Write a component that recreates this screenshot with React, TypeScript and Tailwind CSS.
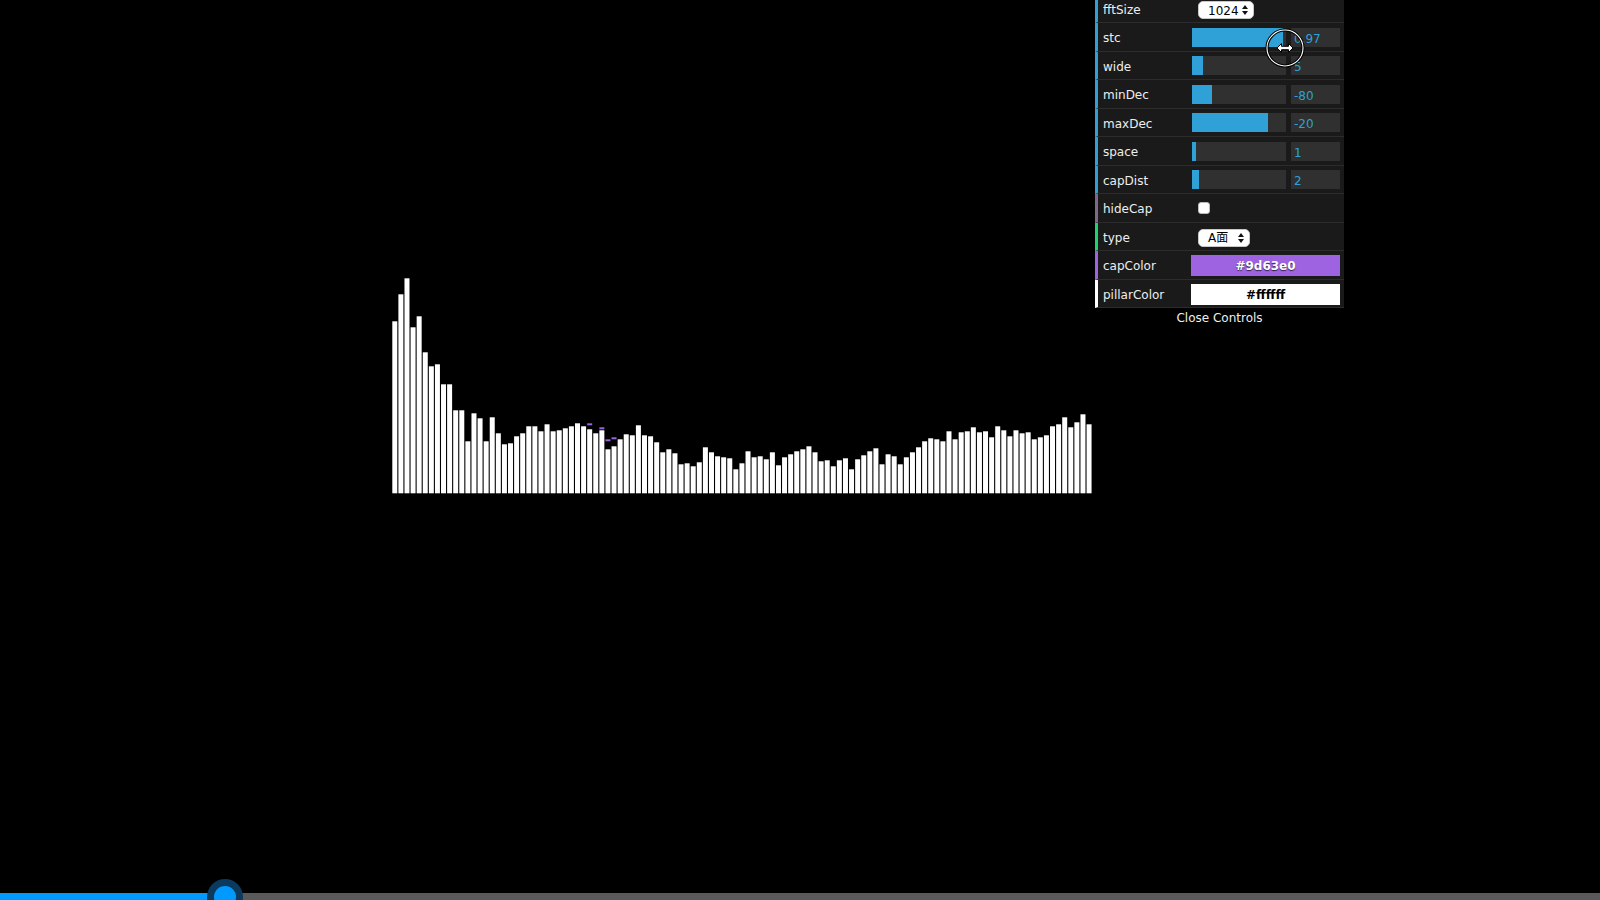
import type { ReactNode } from "react";

// bar heights measured from the spectrum (px)
const bars = [
  172, 199, 215, 166, 177, 141, 127, 129, 109, 109, 83, 83, 52, 80, 75, 52, 76, 60, 49, 50,
  57, 60, 67, 67, 62, 69, 62, 63, 65, 67, 70, 67, 64, 60, 63, 44, 47, 54, 59, 58,
  68, 58, 57, 51, 41, 44, 40, 29, 30, 27, 31, 46, 41, 37, 36, 35, 24, 30, 42, 36,
  37, 34, 41, 28, 36, 39, 42, 44, 47, 41, 32, 33, 27, 33, 35, 24, 34, 38, 42, 45,
  29, 39, 37, 29, 36, 41, 46, 52, 55, 54, 52, 62, 54, 61, 62, 66, 61, 62, 56, 67,
  63, 57, 63, 60, 61, 54, 56, 58, 67, 69, 76, 66, 71, 79, 69,
];

// visible falling caps: bar index -> cap height
const caps: Record<number, number> = { 32: 69, 34: 65, 35: 53, 36: 55 };

const PITCH = 6.09;
const BASE = 223.3;

function Spectrum() {
  return (
    <svg width="700" height="224" className="block ml-[392px] mt-[270px]">
      {bars.map((h, i) => (
        <rect key={i} x={0.3 + i * PITCH} y={BASE - h} width={5} height={h} fill="#ffffff" />
      ))}
      {Object.entries(caps).map(([i, h]) => (
        <rect key={"c" + i} x={0.3 + Number(i) * PITCH} y={BASE - h - 1} width={5} height={2} fill="#9d63e0" />
      ))}
    </svg>
  );
}

function Arrows() {
  return (
    <svg width="6" height="10" viewBox="0 0 6 10">
      <path d="M3 0 L6 4 L0 4 Z" fill="#111" />
      <path d="M3 10 L6 6 L0 6 Z" fill="#111" />
    </svg>
  );
}

function Row({ color, label, children }: { color: string; label: string; children?: ReactNode }) {
  return (
    <div className={`flex items-center h-[28.5px] border-b border-[#2c2c2c] border-l-[3px] pl-[5px] pr-[4px] ${color}`}>
      <div className="w-[89px] pt-[3px] text-[12px] text-[#eee] truncate">{label}</div>
      {children}
    </div>
  );
}

function NumberCtrl({ fill, value }: { fill: number; value: string }) {
  return (
    <div className="flex items-center gap-[5px] mt-[1px]">
      <div className="w-[94px] h-[19px] bg-[#303030]">
        <div className="h-full bg-[#2fa1d6]" style={{ width: fill }} />
      </div>
      <div className="w-[49px] h-[19px] bg-[#303030] text-[#2fa1d6] text-[12px] leading-[19px] pt-[2px] pl-[3px]">{value}</div>
    </div>
  );
}

function Select({ value, width }: { value: string; width: string }) {
  return (
    <div className={`ml-[6px] flex items-center justify-between h-[18px] ${width} bg-white rounded-[5px] border border-[#c8c8c8] pl-[9px] pr-[5px] text-[12px] text-black`}>
      <span className="pt-[1px]">{value}</span>
      <Arrows />
    </div>
  );
}

function Controls() {
  return (
    <div className="absolute top-[-5.5px] left-[1095px] w-[249px] font-['DejaVu_Sans','Noto_Sans_CJK_SC',sans-serif]">
      <div className="bg-[#1a1a1a]">
        <Row color="border-l-[#2fa1d6]" label="fftSize">
          <div className="mt-[4px]">
            <Select value="1024" width="w-[56px]" />
          </div>
        </Row>
        <Row color="border-l-[#2fa1d6]" label="stc"><NumberCtrl fill={91} value="0.97" /></Row>
        <Row color="border-l-[#2fa1d6]" label="wide"><NumberCtrl fill={11} value="5" /></Row>
        <Row color="border-l-[#2fa1d6]" label="minDec"><NumberCtrl fill={20} value="-80" /></Row>
        <Row color="border-l-[#2fa1d6]" label="maxDec"><NumberCtrl fill={76} value="-20" /></Row>
        <Row color="border-l-[#2fa1d6]" label="space"><NumberCtrl fill={4} value="1" /></Row>
        <Row color="border-l-[#2fa1d6]" label="capDist"><NumberCtrl fill={7} value="2" /></Row>
        <Row color="border-l-[#806787]" label="hideCap">
          <div className="ml-[6px] mt-[1px] w-[12px] h-[12px] bg-white rounded-[3px] border border-[#bbb]" />
        </Row>
        <Row color="border-l-[#1ed36f]" label="type">
          <div className="mt-[3px]">
            <Select value="A面" width="w-[52px]" />
          </div>
        </Row>
        <Row color="border-l-[#9d63e0]" label="capColor">
          <div className="-ml-[1px] mt-[2px] w-[149px] h-[21px] bg-[#9d63e0] text-white font-bold text-[12px] leading-[21px] pt-[1px] text-center [text-shadow:0_1px_1px_rgba(0,0,0,0.7)]">
            #9d63e0
          </div>
        </Row>
        <Row color="border-l-[#ffffff]" label="pillarColor">
          <div className="-ml-[1px] mt-[2px] w-[149px] h-[21px] bg-white text-black font-bold text-[12px] leading-[21px] pt-[1px] text-center [text-shadow:0_1px_1px_rgba(255,255,255,0.7)]">
            #ffffff
          </div>
        </Row>
      </div>
      <div className="h-[20px] bg-black text-[#eee] text-[12px] leading-[20px] text-center">Close Controls</div>
    </div>
  );
}

function Cursor() {
  return (
    <svg width="44" height="44" viewBox="0 0 44 44" className="absolute left-[1263px] top-[26px]">
      <circle cx="22" cy="22" r="18" fill="none" stroke="#000" strokeWidth="3.2" />
      <circle cx="22" cy="22" r="18" fill="none" stroke="#fff" strokeWidth="1.1" />
      <path
        d="M14 22 L18.5 17.5 L18.5 20.3 L25.5 20.3 L25.5 17.5 L30 22 L25.5 26.5 L25.5 23.7 L18.5 23.7 L18.5 26.5 Z"
        fill="#fff"
        stroke="#000"
        strokeWidth="1"
        strokeLinejoin="round"
      />
    </svg>
  );
}

function Progress() {
  return (
    <div className="relative flex h-[7px] w-full">
      <div className="w-[225px] h-full bg-[#0099ff]" />
      <div className="flex-1 h-full bg-[#5a5a5a]" />
      <div className="absolute left-[207px] top-[-14px] w-[36px] h-[36px] rounded-full bg-[#0b3a5e] flex items-center justify-center">
        <div className="w-[22px] h-[22px] rounded-full bg-[#0099ff]" />
      </div>
    </div>
  );
}

export default function App() {
  return (
    <div className="relative w-full h-[900px] bg-black overflow-hidden flex flex-col">
      <Spectrum />
      <div className="flex-1" />
      <Progress />
      <Controls />
      <Cursor />
    </div>
  );
}
